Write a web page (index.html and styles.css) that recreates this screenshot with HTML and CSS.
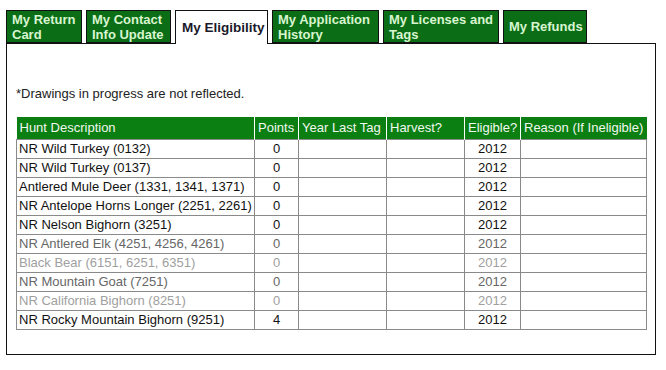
FILE: index.html
```html
<!DOCTYPE html>
<html lang="en">
<head>
    <meta charset="UTF-8">
    <title>My Eligibility</title>
    <link rel="stylesheet" href="styles.css">
</head>
<body>
    <div class="page">
        <ul class="tabs">
            <li class="tab tab-return">My Return<br>Card</li>
            <li class="tab tab-contact">My Contact<br>Info Update</li>
            <li class="tab tab-elig active">My Eligibility</li>
            <li class="tab tab-history">My Application<br>History</li>
            <li class="tab tab-licenses">My Licenses and<br>Tags</li>
            <li class="tab tab-refunds">My Refunds</li>
        </ul>

        <div class="panel">
            <p class="note">*Drawings in progress are not reflected.</p>

            <table class="elig-table">
                <thead>
                    <tr>
                        <th class="col-desc">Hunt Description</th>
                        <th class="col-points">Points</th>
                        <th class="col-year">Year Last Tag</th>
                        <th class="col-harvest">Harvest?</th>
                        <th class="col-elig">Eligible?</th>
                        <th class="col-reason">Reason (If Ineligible)</th>
                    </tr>
                </thead>
                <tbody>
                    <tr>
                        <td>NR Wild Turkey (0132)</td><td class="num">0</td><td></td><td></td><td class="num">2012</td><td></td>
                    </tr>
                    <tr>
                        <td>NR Wild Turkey (0137)</td><td class="num">0</td><td></td><td></td><td class="num">2012</td><td></td>
                    </tr>
                    <tr>
                        <td>Antlered Mule Deer (1331, 1341, 1371)</td><td class="num">0</td><td></td><td></td><td class="num">2012</td><td></td>
                    </tr>
                    <tr>
                        <td>NR Antelope Horns Longer (2251, 2261)</td><td class="num">0</td><td></td><td></td><td class="num">2012</td><td></td>
                    </tr>
                    <tr>
                        <td>NR Nelson Bighorn (3251)</td><td class="num">0</td><td></td><td></td><td class="num">2012</td><td></td>
                    </tr>
                    <tr class="dim">
                        <td>NR Antlered Elk (4251, 4256, 4261)</td><td class="num">0</td><td></td><td></td><td class="num">2012</td><td></td>
                    </tr>
                    <tr class="faded">
                        <td>Black Bear (6151, 6251, 6351)</td><td class="num">0</td><td></td><td></td><td class="num">2012</td><td></td>
                    </tr>
                    <tr class="dim">
                        <td>NR Mountain Goat (7251)</td><td class="num">0</td><td></td><td></td><td class="num">2012</td><td></td>
                    </tr>
                    <tr class="faded">
                        <td>NR California Bighorn (8251)</td><td class="num">0</td><td></td><td></td><td class="num">2012</td><td></td>
                    </tr>
                    <tr>
                        <td>NR Rocky Mountain Bighorn (9251)</td><td class="num">4</td><td></td><td></td><td class="num">2012</td><td></td>
                    </tr>
                </tbody>
            </table>
        </div>
    </div>
</body>
</html>
```

FILE: styles.css
```css
:root {
    --tab-green: #0b6e16;
    --head-green: #0b7f12;
    --tab-text: #d8f5d0;
    --grid-color: #8a8a8a;
}

* {
    margin: 0;
    padding: 0;
    box-sizing: border-box;
}

body {
    font-family: "Liberation Sans", Arial, sans-serif;
    font-size: 13px;
    color: #111;
    background-color: #fff;
}

.page {
    padding: 10px 10px 0 6px;
}

.tabs {
    list-style: none;
    display: flex;
    align-items: stretch;
    gap: 4px;
    height: 34px;
    position: relative;
    z-index: 1;
}

.tab {
    display: flex;
    align-items: center;
    height: 33px;
    padding: 0 5px;
    background-color: var(--tab-green);
    border: 1px solid #111;
    color: var(--tab-text);
    font-weight: 700;
    font-size: 13px;
    line-height: 15px;
    white-space: nowrap;
}

.tab-return { width: 76px; }
.tab-contact { width: 85px; }
.tab-elig { width: 93px; }
.tab-history { width: 107px; }
.tab-licenses { width: 116px; }
.tab-refunds { width: 84px; }

.tab.active {
    height: 34px;
    padding: 0 6px;
    background-color: #fff;
    border-bottom: none;
    color: #1a1a2a;
    font-size: 13.5px;
}

.panel {
    width: 650px;
    height: 312px;
    margin-top: -1px;
    border: 1px solid #111;
    padding: 42px 9px 0 9px;
}

.note {
    font-size: 13px;
    line-height: 15px;
    color: #222;
}

.elig-table {
    width: 630px;
    margin-top: 16px;
    border-collapse: collapse;
    table-layout: fixed;
}

.elig-table th {
    background-color: var(--head-green);
    color: #f2f8f0;
    font-weight: 400;
    text-align: left;
    height: 22px;
    padding: 0 2px 0 3px;
    border-left: 1px solid #fff;
    border-right: 1px solid #fff;
    white-space: nowrap;
}

.elig-table th:first-child {
    border-left: none;
}

.elig-table th:last-child {
    border-right: none;
}

.elig-table td {
    height: 19px;
    padding: 0 2px;
    border: 1px solid var(--grid-color);
    white-space: nowrap;
}

.elig-table .num {
    text-align: center;
}

.col-desc { width: 238px; }
.col-points { width: 44px; }
.col-year { width: 88px; }
.col-harvest { width: 78px; }
.col-elig { width: 56px; }
.col-reason { width: 126px; }

.elig-table tr.dim td {
    color: #666;
}

.elig-table tr.faded td {
    color: #a0a0a0;
}
```
